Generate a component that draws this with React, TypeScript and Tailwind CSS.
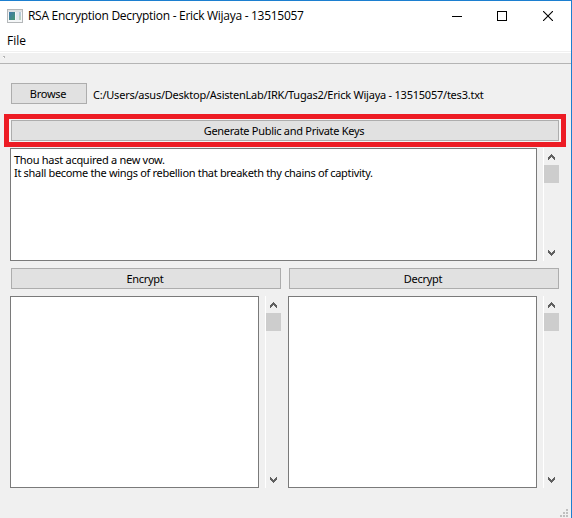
import type { ReactNode } from "react";

const buttonBase =
  "flex h-[21px] items-center justify-center border border-[#adadad] bg-[#e1e1e1] pr-0.5 leading-none tracking-[-0.29px] whitespace-pre";

function Chevron({ down = false }: { down?: boolean }) {
  return (
    <svg
      width="7"
      height="6"
      viewBox="0 0 7 6"
      shapeRendering="crispEdges"
      className={down ? "rotate-180" : ""}
    >
      <path
        d="M3 0h1v1h1v1h1v1h1v3h-1v-1h-1v-1h-1v-1h-1v1h-1v1h-1v1h-1v-3h1v-1h1v-1h1z"
        fill="#606060"
      />
    </svg>
  );
}

function ScrollBar() {
  return (
    <div className="ml-1.5 flex w-4 flex-col items-center border-l border-white bg-[#f0f0f0]">
      <div className="flex h-[17px] items-start pt-1.5">
        <Chevron />
      </div>
      <div className="h-[18px] w-full bg-[#cdcdcd]" />
      <div className="mt-auto flex h-[17px] items-start pt-[6px]">
        <Chevron down />
      </div>
    </div>
  );
}

function TextPane({ children }: { children?: ReactNode }) {
  return (
    <div className="flex h-full flex-1">
      <div className="flex-1 border border-[#7a7a7a] bg-white px-[3px] pt-1 leading-[13px] whitespace-pre">
        {children}
      </div>
      <ScrollBar />
    </div>
  );
}

function SizeGrip() {
  return (
    <svg width="8" height="8" viewBox="0 0 8 8" fill="#bfbfbf" shapeRendering="crispEdges">
      <path d="M6 0h2v2h-2zM3 3h2v2h-2zM6 3h2v2h-2zM0 6h2v2h-2zM3 6h2v2h-2zM6 6h2v2h-2z" />
    </svg>
  );
}

function TitleBar() {
  return (
    <div className="flex h-[30px] items-center bg-white pl-[7px]">
      <svg width="16" height="14" viewBox="0 0 16 14" shapeRendering="crispEdges">
        <defs>
          <linearGradient id="pane" x1="0" y1="0" x2="1" y2="1">
            <stop offset="0" stopColor="#3f78ac" />
            <stop offset="1" stopColor="#459570" />
          </linearGradient>
        </defs>
        <path d="M0 0h16v14h-16z" fill="#b4b7b9" />
        <path d="M1 1h14v2h-14z" fill="#dde0e2" />
        <path d="M1 3h14v10h-14z" fill="#f5f7f8" />
        <path d="M2 3h6v8h-6z" fill="url(#pane)" />
        <path d="M9 3h3v8h-3z" fill="#e2e8ed" />
        <path d="M12 3h2v4h-2z" fill="#b5cad8" />
        <path d="M12 7h2v4h-2z" fill="#b9d1c1" />
      </svg>
      <span className="ml-[5px] font-['Open_Sans','Noto_Sans',sans-serif] text-[12px] leading-none tracking-[-0.29px] whitespace-pre">
        RSA Encryption Decryption - Erick Wijaya - 13515057
      </span>
      <div className="mr-[18px] ml-auto flex items-center">
        <div className="mr-[35px] h-px w-[10px] bg-black" />
        <div className="mr-9 size-[10px] border border-black" />
        <svg width="10" height="10" viewBox="0 0 10 10" stroke="#000" strokeWidth="1.1">
          <path d="M0 0L10 10M10 0L0 10" />
        </svg>
      </div>
    </div>
  );
}

export default function App() {
  return (
    <div className="flex h-[518px] w-[572px] flex-col overflow-hidden border-t border-r border-[#1c7fd0] bg-[#f0f0f0] font-['Noto_Sans','Open_Sans',sans-serif] text-[11px] text-black">
      <TitleBar />
      <div className="flex h-[20px] items-center bg-white pl-[7px] font-['Open_Sans','Noto_Sans',sans-serif] text-[12px] leading-none">
        File
      </div>
      <div className="h-0.5 border-t border-[#f0f0f0] bg-white" />
      <div className="h-[11px] border-b border-[#b4b4b4] pt-[3px] pl-[3px]">
        <div className="size-0.5 border-t border-r border-[#b4b4b4] bg-white" />
      </div>

      <div className="flex h-[50px] items-start pt-[19px] pl-[11px]">
        <div className={`w-[76px] ${buttonBase}`}>Browse</div>
        <span className="mt-[5px] ml-1.5 leading-[13px] tracking-[-0.23px] whitespace-pre">
          C:/Users/asus/Desktop/AsistenLab/IRK/Tugas2/Erick Wijaya - 13515057/tes3.txt
        </span>
      </div>

      <div className="mr-[5px] ml-1 h-[33px] border-5 border-[#ed1c24] bg-[#f4f4f4] px-0.5 pt-px">
        <div className={buttonBase}>Generate Public and Private Keys</div>
      </div>

      <div className="mt-px mr-3 ml-[10px] flex h-[113px]">
        <TextPane>
          <div className="tracking-[-0.28px]">Thou hast acquired a new vow.</div>
          <div className="tracking-[-0.32px]">
            It shall become the wings of rebellion that breaketh thy chains of captivity.
          </div>
        </TextPane>
      </div>

      <div className="mt-[7px] mr-3 ml-[11px] flex gap-2">
        <div className={`flex-1 ${buttonBase}`}>Encrypt</div>
        <div className={`flex-1 ${buttonBase}`}>Decrypt</div>
      </div>

      <div className="mt-[7px] mr-3 ml-[10px] flex h-[192px] gap-[7px]">
        <TextPane />
        <TextPane />
      </div>

      <div className="mt-auto flex justify-end pr-[3px] pb-px">
        <SizeGrip />
      </div>
    </div>
  );
}
